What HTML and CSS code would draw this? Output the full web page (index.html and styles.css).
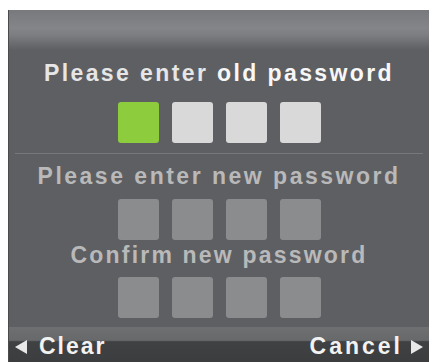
FILE: index.html
```html
<!DOCTYPE html>
<html>
<head>
<meta charset="utf-8">
<link rel="stylesheet" href="styles.css">
</head>
<body>
<div class="panel">
  <div class="header"></div>
  <div class="title bright">Please enter <span class="strong">old password</span></div>
  <div class="boxes first">
    <div class="box green"></div>
    <div class="box light"></div>
    <div class="box light"></div>
    <div class="box light"></div>
  </div>
  <div class="divider"></div>
  <div class="title dim t2">Please enter new password</div>
  <div class="boxes second">
    <div class="box mid"></div>
    <div class="box mid"></div>
    <div class="box mid"></div>
    <div class="box mid"></div>
  </div>
  <div class="title dim t3">Confirm new password</div>
  <div class="boxes third">
    <div class="box mid"></div>
    <div class="box mid"></div>
    <div class="box mid"></div>
    <div class="box mid"></div>
  </div>
  <div class="footer">
    <div class="fbtn"><span class="tri left"></span>Clear</div>
    <div class="fbtn wide">Cancel<span class="tri right"></span></div>
  </div>
</div>
</body>
</html>
```
FILE: styles.css
```css
html, body {
  margin: 0;
  padding: 0;
  background: #ffffff;
}
body {
  width: 432px;
  height: 362px;
  overflow: hidden;
  font-family: "Liberation Sans", Arial, sans-serif;
}
.panel {
  margin: 10px 0 0 8px;
  width: 421px;
  height: 352px;
  background: #5e5f62;
  display: flex;
  flex-direction: column;
  border-left: 1px solid #4a4b4d;
  box-sizing: border-box;
}
.header {
  height: 40px;
  flex: none;
  background: linear-gradient(to bottom, #77797c 0%, #838588 45%, #7c7e81 62%, #5e5f62 100%);
}
.title {
  font-weight: bold;
  font-size: 23px;
  line-height: 26px;
  letter-spacing: 2.4px;
  text-align: center;
  white-space: nowrap;
}
.bright {
  margin-top: 10px;
  color: #e6e6e6;
}
.strong {
  color: #f7f7f7;
}
.dim {
  color: #b9b9ba;
}
.t2 {
  margin-top: 10px;
  line-height: 24px;
  letter-spacing: 2.5px;
}
.t3 {
  margin-top: 3px;
  line-height: 24px;
  letter-spacing: 2.2px;
}
.boxes {
  display: flex;
  justify-content: center;
  gap: 13px;
  margin-left: 1px;
}
.first { margin-top: 16px; }
.second { margin-top: 11px; }
.third { margin-top: 10px; }
.box {
  width: 41px;
  height: 41px;
  border-radius: 3px;
}
.green { background: #8dcc3c; }
.light { background: #d9d9da; }
.mid { background: #8b8c8e; }
.divider {
  margin: 10px 6px 0 6px;
  height: 1px;
  background: #77787a;
}
.footer {
  margin-top: 9px;
  flex: 1;
  background: linear-gradient(to bottom, #6e6f71 0%, #68696b 38%, #404143 42%, #3c3d3f 100%);
  display: flex;
  justify-content: space-between;
  align-items: center;
  padding: 4px 6px 0 6px;
  color: #f2f2f2;
  font-weight: bold;
  font-size: 23px;
  letter-spacing: 2px;
}
.fbtn {
  display: flex;
  align-items: center;
}
.wide {
  letter-spacing: 3px;
}
.tri {
  width: 0;
  height: 0;
  border-top: 7px solid transparent;
  border-bottom: 7px solid transparent;
}
.tri.left {
  border-right: 12px solid #e8e8e8;
  margin-right: 12px;
}
.tri.right {
  border-left: 12px solid #e8e8e8;
  margin-left: 8px;
}
```
